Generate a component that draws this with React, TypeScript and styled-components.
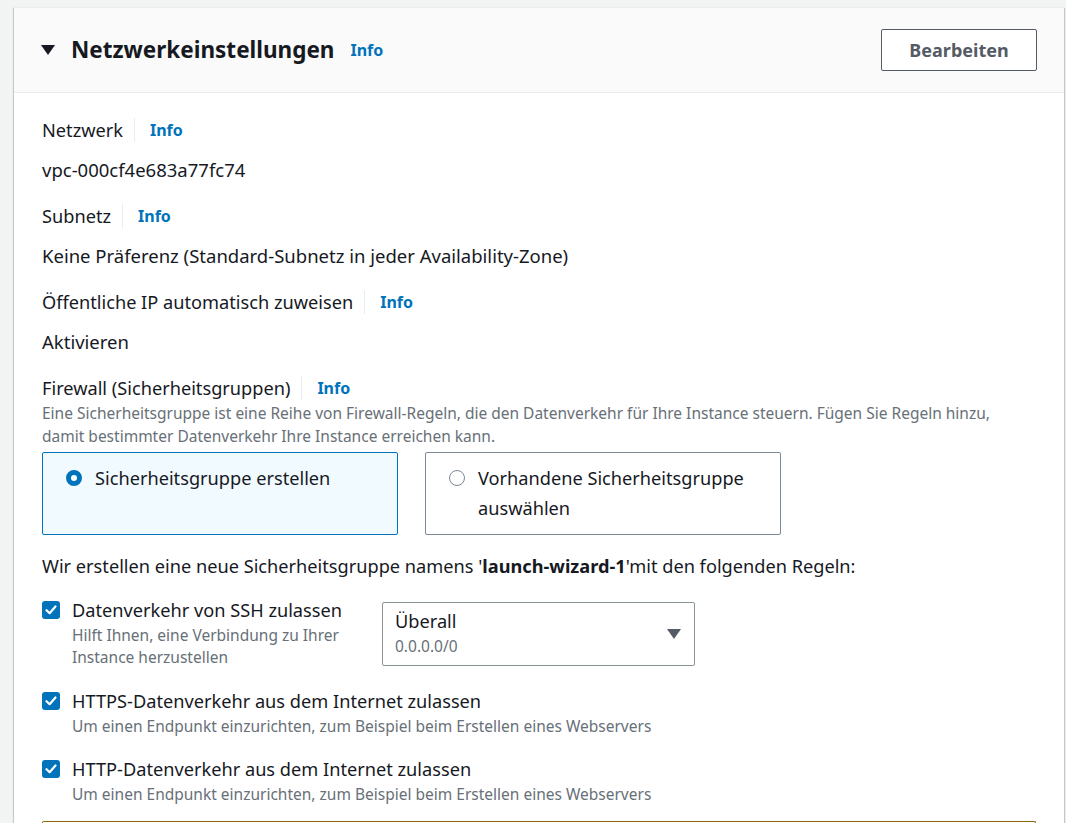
import React from "react";
import styled, { createGlobalStyle } from "styled-components";

const Global = createGlobalStyle`
  html, body { margin: 0; padding: 0; background: #f2f3f3; }
  body { font-family: "Noto Sans", "Open Sans", Arial, sans-serif; color: #16191f; }
  * { box-sizing: border-box; }
`;

const Page = styled.div`
  padding: 7px 2px 0 14px;
  height: 823px;
  overflow: hidden;
`;

const Card = styled.section`
  background: #ffffff;
  border-top: 1px solid #eaeded;
  box-shadow: 0 1px 1px 0 rgba(0, 28, 36, 0.3), 1px 1px 1px 0 rgba(0, 28, 36, 0.15),
    -1px 1px 1px 0 rgba(0, 28, 36, 0.15);
  min-height: 900px;
`;

const Header = styled.header`
  display: flex;
  align-items: center;
  justify-content: space-between;
  height: 85px;
  padding: 0 27px 0 27px;
  background: #fafafa;
  border-bottom: 1px solid #eaeded;
`;

const TitleRow = styled.div`
  display: flex;
  align-items: center;
`;

const Caret = styled.span`
  display: inline-block;
  width: 0;
  height: 0;
  border-left: 7px solid transparent;
  border-right: 7px solid transparent;
  border-top: 10px solid #16191f;
  margin-right: 16px;
`;

const Title = styled.h2`
  margin: 0;
  font-size: 22.5px;
  font-weight: 700;
  line-height: 30px;
  color: #16191f;
`;

const InfoLink = styled.a<{ $gap?: number }>`
  font-size: 16px;
  font-weight: 700;
  color: #0073bb;
  text-decoration: none;
  margin-left: ${(p) => p.$gap ?? 16}px;
  line-height: 24px;
`;

const Button = styled.button`
  width: 156px;
  height: 42px;
  border: 1px solid #545b64;
  border-radius: 2px;
  background: #ffffff;
  color: #545b64;
  font-family: inherit;
  font-size: 18px;
  font-weight: 700;
`;

const Body = styled.div`
  padding: 25px 28px 0 28px;
  display: flex;
  flex-direction: column;
`;

const Field = styled.div<{ $mt?: number }>`
  display: flex;
  flex-direction: column;
  margin-top: ${(p) => p.$mt ?? 0}px;
`;

const LabelRow = styled.div`
  display: flex;
  align-items: center;
  font-size: 18.2px;
  line-height: 24px;
`;

const LabelText = styled.span`
  padding-right: 11px;
  border-right: 1px solid #eaeded;
`;

const Value = styled.div`
  font-size: 18.5px;
  line-height: 24px;
  margin-top: 16px;
`;

const Description = styled.div`
  font-size: 15.5px;
  line-height: 23px;
  color: #687078;
  margin-top: 2px;
`;

const Tiles = styled.div`
  display: grid;
  grid-template-columns: 356px 356px;
  gap: 27px;
  margin-top: 4px;
`;

const Tile = styled.div<{ $selected?: boolean }>`
  display: flex;
  align-items: flex-start;
  gap: 13px;
  height: 83px;
  padding: 10px 23px;
  border: 1px solid ${(p) => (p.$selected ? "#0073bb" : "#7d8998")};
  border-radius: 2px;
  background: ${(p) => (p.$selected ? "#f1faff" : "#ffffff")};
`;

const Radio = styled.span<{ $checked?: boolean }>`
  flex: none;
  width: 16px;
  height: 16px;
  margin-top: 7px;
  border-radius: 50%;
  border: ${(p) => (p.$checked ? "5px solid #0073bb" : "1.5px solid #7d8998")};
  background: #ffffff;
`;

const TileText = styled.span`
  font-size: 18.2px;
  line-height: 30px;
  max-width: 290px;
`;

const Intro = styled.div`
  font-size: 18.2px;
  line-height: 24px;
  margin-top: 19px;
`;

const RuleRow = styled.div<{ $mt: number }>`
  display: flex;
  align-items: flex-start;
  margin-top: ${(p) => p.$mt}px;
`;

const RuleCheck = styled.div<{ $width?: number }>`
  display: flex;
  gap: 12px;
  align-items: flex-start;
  width: ${(p) => (p.$width ? `${p.$width}px` : "auto")};
  flex: none;
`;

const Check = styled.span`
  flex: none;
  width: 18px;
  height: 18px;
  margin-top: 3px;
  border-radius: 3px;
  background: #0073bb;
  display: flex;
  align-items: center;
  justify-content: center;
`;

const RuleText = styled.div`
  display: flex;
  flex-direction: column;
`;

const RuleLabel = styled.span`
  font-size: 18.2px;
  line-height: 24px;
  white-space: nowrap;
`;

const RuleDesc = styled.span`
  font-size: 15.5px;
  line-height: 22px;
  color: #687078;
  margin-top: 2px;
`;

const Select = styled.div`
  width: 313px;
  height: 64px;
  margin-top: 4px;
  border: 1px solid #879596;
  border-radius: 2px;
  padding: 6px 13px 0 12px;
  display: flex;
  align-items: center;
  justify-content: space-between;
`;

const SelectText = styled.div`
  display: flex;
  flex-direction: column;
  align-self: flex-start;
`;

const SelectMain = styled.span`
  font-size: 18.2px;
  line-height: 24px;
`;

const SelectSub = styled.span`
  font-size: 15.5px;
  line-height: 22px;
  color: #687078;
  margin-top: 2px;
`;

const SelectCaret = styled.span`
  width: 0;
  height: 0;
  border-left: 7px solid transparent;
  border-right: 7px solid transparent;
  border-top: 10px solid #545b64;
  margin-bottom: 6px;
`;

const Alert = styled.div`
  margin-top: 16px;
  height: 40px;
  border: 1px solid #8d6605;
  border-bottom: none;
  border-radius: 2px 2px 0 0;
`;

const CheckMark = () => (
  <svg width="12" height="10" viewBox="0 0 12 10">
    <path d="M1.5 5.2 L4.6 8.2 L10.5 1.5" fill="none" stroke="#fff" strokeWidth="2.2" strokeLinecap="round" strokeLinejoin="round" />
  </svg>
);

const Rule = ({
  mt,
  label,
  desc,
  width,
  children,
}: {
  mt: number;
  label: string;
  desc: React.ReactNode;
  width?: number;
  children?: React.ReactNode;
}) => (
  <RuleRow $mt={mt}>
    <RuleCheck $width={width}>
      <Check><CheckMark /></Check>
      <RuleText>
        <RuleLabel>{label}</RuleLabel>
        <RuleDesc>{desc}</RuleDesc>
      </RuleText>
    </RuleCheck>
    {children}
  </RuleRow>
);

export default function App() {
  return (
    <>
      <Global />
      <Page>
        <Card>
          <Header>
            <TitleRow>
              <Caret />
              <Title>Netzwerkeinstellungen</Title>
              <InfoLink $gap={16}>Info</InfoLink>
            </TitleRow>
            <Button>Bearbeiten</Button>
          </Header>
          <Body>
            <Field>
              <LabelRow>
                <LabelText>Netzwerk</LabelText>
                <InfoLink $gap={15}>Info</InfoLink>
              </LabelRow>
              <Value>vpc-000cf4e683a77fc74</Value>
            </Field>
            <Field $mt={22}>
              <LabelRow>
                <LabelText>Subnetz</LabelText>
                <InfoLink $gap={15}>Info</InfoLink>
              </LabelRow>
              <Value>Keine Präferenz (Standard-Subnetz in jeder Availability-Zone)</Value>
            </Field>
            <Field $mt={22}>
              <LabelRow>
                <LabelText>Öffentliche IP automatisch zuweisen</LabelText>
                <InfoLink $gap={15}>Info</InfoLink>
              </LabelRow>
              <Value>Aktivieren</Value>
            </Field>
            <Field $mt={22}>
              <LabelRow>
                <LabelText>Firewall (Sicherheitsgruppen)</LabelText>
                <InfoLink $gap={15}>Info</InfoLink>
              </LabelRow>
              <Description>
                Eine Sicherheitsgruppe ist eine Reihe von Firewall-Regeln, die den Datenverkehr für Ihre Instance steuern. Fügen Sie Regeln hinzu,
                <br />
                damit bestimmter Datenverkehr Ihre Instance erreichen kann.
              </Description>
            </Field>
            <Tiles>
              <Tile $selected>
                <Radio $checked />
                <TileText>Sicherheitsgruppe erstellen</TileText>
              </Tile>
              <Tile>
                <Radio />
                <TileText>Vorhandene Sicherheitsgruppe auswählen</TileText>
              </Tile>
            </Tiles>
            <Intro>
              Wir erstellen eine neue Sicherheitsgruppe namens '<b>launch-wizard-1</b>'mit den folgenden Regeln:
            </Intro>
            <Rule
              mt={20}
              width={340}
              label="Datenverkehr von SSH zulassen"
              desc={<>Hilft Ihnen, eine Verbindung zu Ihrer<br />Instance herzustellen</>}
            >
              <Select>
                <SelectText>
                  <SelectMain>Überall</SelectMain>
                  <SelectSub>0.0.0.0/0</SelectSub>
                </SelectText>
                <SelectCaret />
              </Select>
            </Rule>
            <Rule
              mt={21}
              label="HTTPS-Datenverkehr aus dem Internet zulassen"
              desc="Um einen Endpunkt einzurichten, zum Beispiel beim Erstellen eines Webservers"
            />
            <Rule
              mt={20}
              label="HTTP-Datenverkehr aus dem Internet zulassen"
              desc="Um einen Endpunkt einzurichten, zum Beispiel beim Erstellen eines Webservers"
            />
            <Alert />
          </Body>
        </Card>
      </Page>
    </>
  );
}
